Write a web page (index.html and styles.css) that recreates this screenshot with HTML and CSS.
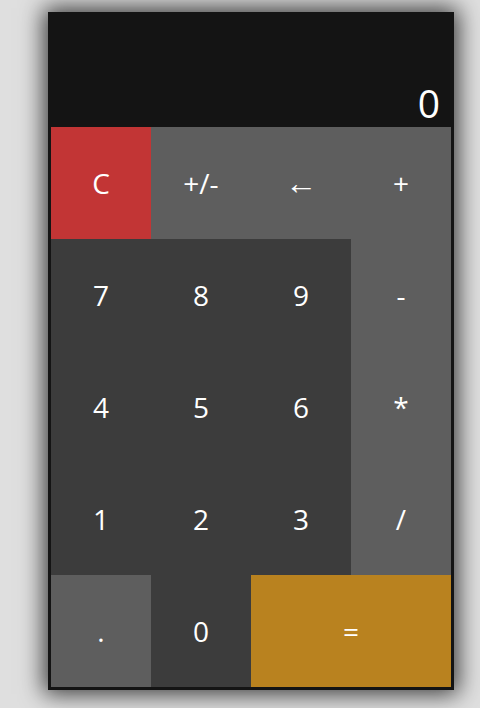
FILE: index.html
```html
<!DOCTYPE html>
<html>
<head>
<meta charset="utf-8">
<link rel="stylesheet" href="styles.css">
</head>
<body>
<div class="calc">
  <div class="display">0</div>
  <div class="keys">
    <div class="key red">C</div>
    <div class="key gray">+/-</div>
    <div class="key gray arrow">←</div>
    <div class="key gray">+</div>
    <div class="key dark">7</div>
    <div class="key dark">8</div>
    <div class="key dark">9</div>
    <div class="key gray">-</div>
    <div class="key dark">4</div>
    <div class="key dark">5</div>
    <div class="key dark">6</div>
    <div class="key gray">*</div>
    <div class="key dark">1</div>
    <div class="key dark">2</div>
    <div class="key dark">3</div>
    <div class="key gray">/</div>
    <div class="key gray">.</div>
    <div class="key dark">0</div>
    <div class="key gold wide">=</div>
  </div>
</div>
</body>
</html>
```
FILE: styles.css
```css
html {
  margin: 0;
  padding: 0;
  height: 100%;
  background: #dfdfdf;
}
body {
  margin: 0;
  min-height: 100%;
  box-sizing: border-box;
  padding: 12px 0 0 48px;
  background: #dfdfdf;
  font-family: "Open Sans", "DejaVu Sans", sans-serif;
}
.calc {
  width: 400px;
  border: 3px solid #141414;
  background: #141414;
  box-shadow: 0 0 22px 4px rgba(0, 0, 0, 0.75);
  display: flex;
  flex-direction: column;
}
.display {
  height: 112px;
  box-sizing: border-box;
  color: #fff;
  font-size: 39px;
  line-height: 1;
  display: flex;
  align-items: flex-end;
  justify-content: flex-end;
  padding: 0 11px 5px 0;
}
.keys {
  display: grid;
  grid-template-columns: repeat(4, 100px);
  grid-auto-rows: 112px;
}
.key {
  display: flex;
  align-items: center;
  justify-content: center;
  color: #fff;
  font-size: 28px;
}
.arrow {
  font-family: "Liberation Sans", sans-serif;
  font-size: 32px;
}
.red { background: #c23535; }
.gray { background: #5e5e5e; }
.dark { background: #3c3c3c; }
.gold { background: #b9821f; }
.wide { grid-column: span 2; }
```
